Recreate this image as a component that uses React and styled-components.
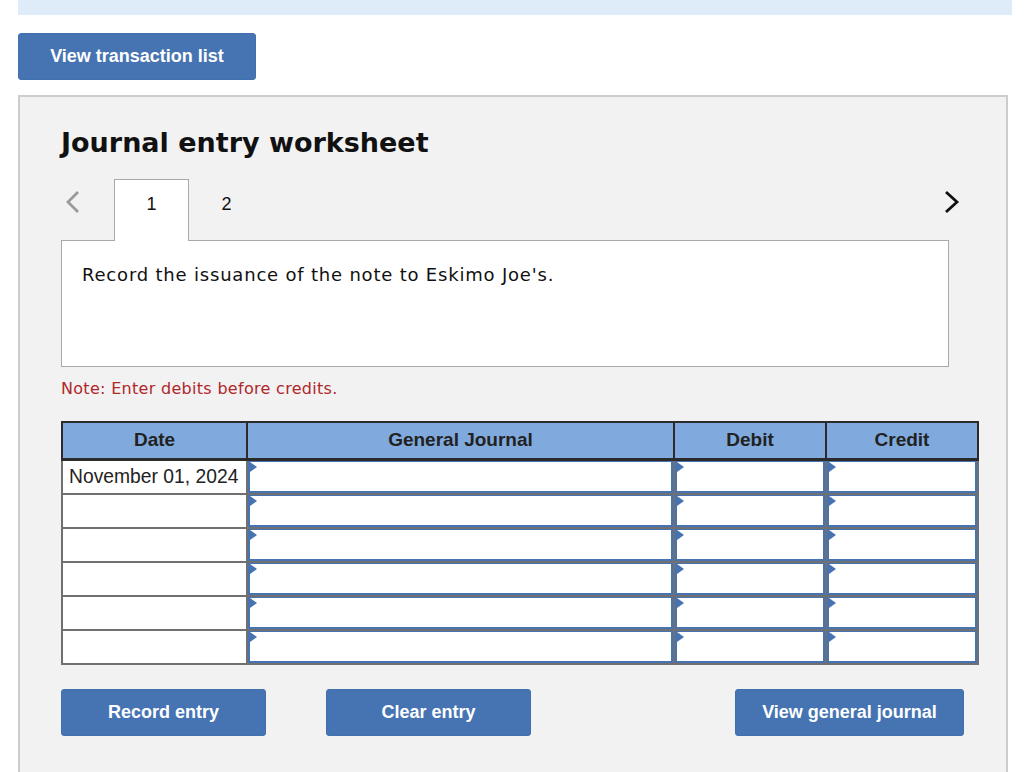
import { styled, createGlobalStyle } from "styled-components";

const GlobalStyle = createGlobalStyle`
  body {
    margin: 0;
    background: #fff;
    font-family: "Liberation Sans", Arial, sans-serif;
  }
`;

const rows = [
  { date: "November 01, 2024" },
  { date: "" },
  { date: "" },
  { date: "" },
  { date: "" },
  { date: "" },
];

export default function App() {
  return (
    <>
      <GlobalStyle />
      <Page>
        <TopBar />
        <BlueButton $width={238}>View transaction list</BlueButton>
        <Panel>
          <Title>Journal entry worksheet</Title>
          <TabRow>
            <Arrow $muted>
              <svg width="18" height="24" viewBox="0 0 18 24">
                <path d="M14 2 L4 12 L14 22" fill="none" stroke="#9a9a9a" strokeWidth="2.8" />
              </svg>
            </Arrow>
            <Tab $active>1</Tab>
            <Tab>2</Tab>
            <Spacer />
            <Arrow>
              <svg width="18" height="24" viewBox="0 0 18 24">
                <path d="M3 2 L14 12 L3 22" fill="none" stroke="#111" strokeWidth="2.8" />
              </svg>
            </Arrow>
          </TabRow>
          <Prompt>Record the issuance of the note to Eskimo Joe's.</Prompt>
          <Note>Note: Enter debits before credits.</Note>
          <Table>
            <colgroup>
              <col style={{ width: 185 }} />
              <col style={{ width: 427 }} />
              <col style={{ width: 152 }} />
              <col style={{ width: 152 }} />
            </colgroup>
            <thead>
              <tr>
                <Th>Date</Th>
                <Th>General Journal</Th>
                <Th>Debit</Th>
                <Th>Credit</Th>
              </tr>
            </thead>
            <tbody>
              {rows.map((r, i) => (
                <tr key={i}>
                  <DateCell>{r.date}</DateCell>
                  <InputCell><Field /></InputCell>
                  <InputCell><Field /></InputCell>
                  <InputCell><Field /></InputCell>
                </tr>
              ))}
            </tbody>
          </Table>
          <ButtonRow>
            <BlueButton $width={205}>Record entry</BlueButton>
            <BlueButton $width={205} style={{ marginLeft: 60 }}>Clear entry</BlueButton>
            <Spacer />
            <BlueButton $width={229} style={{ marginRight: 13 }}>View general journal</BlueButton>
          </ButtonRow>
        </Panel>
      </Page>
    </>
  );
}

const Page = styled.div`
  padding: 0 12px 0 18px;
  display: flex;
  flex-direction: column;
  align-items: flex-start;
`;

const TopBar = styled.div`
  align-self: stretch;
  height: 15px;
  background: #deebf8;
  margin-bottom: 18px;
`;

const BlueButton = styled.button`
  width: ${(p) => p.$width}px;
  height: 47px;
  background: #4674b3;
  border: 1px solid #4070ae;
  border-radius: 3px;
  color: #fff;
  font-family: "Liberation Sans", Arial, sans-serif;
  font-weight: bold;
  font-size: 18px;
  padding: 0;
  cursor: pointer;
`;

const Panel = styled.div`
  box-sizing: border-box;
  width: 990px;
  height: 680px;
  margin-top: 15px;
  background: #f2f2f2;
  border: 2px solid #cdcdcd;
  border-bottom: none;
  padding: 28px 0 0 41px;
`;

const Title = styled.h2`
  margin: 0;
  font-family: "DejaVu Sans", Verdana, sans-serif;
  font-weight: bold;
  font-size: 27px;
  color: #111;
  line-height: 36px;
`;

const TabRow = styled.div`
  display: flex;
  align-items: stretch;
  height: 61px;
  width: 906px;
  margin-top: 18px;
`;

const Arrow = styled.div`
  width: 53px;
  display: flex;
  align-items: flex-start;
  padding-top: 11px;
  justify-content: ${(p) => (p.$muted ? "flex-start" : "flex-end")};
  padding-left: ${(p) => (p.$muted ? "3px" : "0")};
  padding-right: ${(p) => (p.$muted ? "0" : "6px")};
  box-sizing: border-box;
`;

const Tab = styled.div`
  width: 75px;
  box-sizing: border-box;
  display: flex;
  justify-content: center;
  padding-top: 14px;
  font-size: 18px;
  color: #111;
  background: ${(p) => (p.$active ? "#fff" : "transparent")};
  border: ${(p) => (p.$active ? "1px solid #a9a9a9" : "1px solid transparent")};
  border-bottom: none;
  position: relative;
  margin-bottom: ${(p) => (p.$active ? "-1px" : "0")};
  z-index: 1;
`;

const Spacer = styled.div`
  flex: 1;
`;

const Prompt = styled.div`
  box-sizing: border-box;
  width: 888px;
  height: 127px;
  background: #fff;
  border: 1px solid #a9a9a9;
  padding: 23px 20px;
  font-family: "DejaVu Sans", Verdana, sans-serif;
  font-size: 18px;
  letter-spacing: 0.8px;
  color: #111;
`;

const Note = styled.div`
  margin-top: 12px;
  font-family: "DejaVu Sans", Verdana, sans-serif;
  font-size: 16px;
  letter-spacing: 0.3px;
  color: #b0272a;
  line-height: 20px;
`;

const Table = styled.table`
  margin-top: 22px;
  width: 916px;
  border-collapse: collapse;
  table-layout: fixed;
  background: #fff;
`;

const Th = styled.th`
  height: 37px;
  padding: 0;
  background: #80aade;
  border: 2px solid #2b2b2b;
  border-bottom-width: 3px;
  font-family: "Liberation Sans", Arial, sans-serif;
  font-size: 19px;
  font-weight: bold;
  color: #222;
  text-align: center;
  box-sizing: border-box;
`;

const DateCell = styled.td`
  height: 34px;
  padding: 0 6px;
  border: 2px solid #707070;
  font-family: "Liberation Sans", Arial, sans-serif;
  font-size: 19.3px;
  color: #222;
  box-sizing: border-box;
  white-space: nowrap;
`;

const InputCell = styled.td`
  height: 34px;
  padding: 0;
  border: 2px solid #707070;
  box-sizing: border-box;
`;

const Field = styled.div`
  position: relative;
  box-sizing: border-box;
  height: 32px;
  border: 2px solid #4674b3;
  border-top-width: 1px;
  background: #fff;

  &::before {
    content: "";
    position: absolute;
    left: 0;
    top: 0;
    border-top: 5px solid transparent;
    border-bottom: 5px solid transparent;
    border-left: 7px solid #4674b3;
  }
`;

const ButtonRow = styled.div`
  display: flex;
  width: 916px;
  margin-top: 24px;
`;
